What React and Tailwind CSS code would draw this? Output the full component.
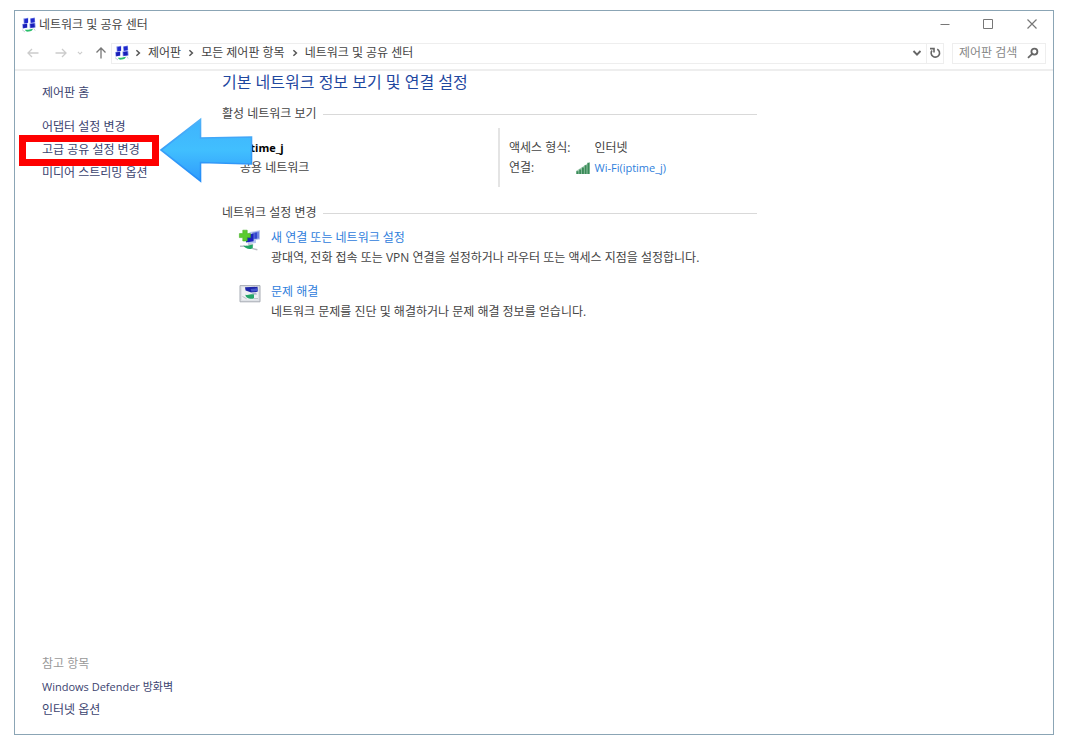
import React from 'react';

const NetworkIcon = ({ className }) => (
  <svg viewBox="0 0 16 16" className={className} aria-hidden="true">
    <path d="m2.4 1.6 4.8-.8v5l-4.4.8zM9 1.4l4.8-.8.4 4.6-4.8.8z" fill="#7d8ce8" />
    <path d="m3.4 2.2 3.6-.6v4.2l-3.6.6zM9.8 1.8l3.6-.6.2 4-3.6.6z" fill="#2029cc" />
    <path d="m1.2 7 5.2-.8v4.6l-4.8.6zM8.4 6.6l5.8-.8.4 4.6-5.8.8z" fill="#7d8ce8" />
    <path d="M2 7.4 6 6.8v3.8l-3.8.6zM9.2 7l4.2-.6.4 3.8-4.2.6z" fill="#1a1fb8" />
    <path d="M1 12.6 4 15M12.8 11.6l1.4 2" stroke="#c9d2dc" />
    <path d="M4 12.8c2 0 2.8.2 4.4-.4l3.4-.6c.2 1.4-1.8 2.8-4.2 2.8-1.6.2-3.4-.4-3.6-1.8z" fill="#2bbf6c" />
  </svg>
);

const NewConnectionIcon = () => (
  <svg viewBox="0 0 24 24" className="w-6 h-6" aria-hidden="true">
    <path d="m12 4 10-1.8v9L18 12v3l-8 1V6z" fill="#b9c6ee" />
    <path d="m14.4 4.6 6.6-1.2v7l-6.6 1.2z" fill="#6f83de" />
    <path d="m8 7 7.6-1.4v7.6L8 14.6z" fill="#1b22bd" />
    <path d="m16.4 5 2.6-.4v5.8l-2.6.4z" fill="#3446cf" />
    <path d="M9.4 15.4h5l1.4 1.8-5 .6z" fill="#c3c8d2" />
    <path d="M2 18.2h7M14 20.4l5.4 1.4" stroke="#b8bcc2" strokeWidth="1.4" />
    <path d="M5.4 17.6c2.8 1 5-.6 9.4-1.2v3.4c-1 2-7.6 1.8-9.4-2.2z" fill="#21a565" />
    <path d="M4.8 2.2h4.4v3.4h3.2v4H9.2V13H4.8V9.6H1.4v-4h3.4z" fill="#5bcb2f" stroke="#45b025" strokeWidth=".6" />
  </svg>
);

const TroubleshootIcon = () => (
  <svg viewBox="0 0 24 24" className="w-6 h-6" aria-hidden="true">
    <path d="M2 3.6h20v16.2H2z" fill="#dfe2e7" stroke="#a7acb4" />
    <path d="M4 5.4h16v12.4H4z" fill="#eef0f3" />
    <path d="m7 5.2 12.6-.4v5l-6.4.6-5.6-2z" fill="#1d25a8" />
    <path d="m12.6 7 7-.8v2.8l-6.2.6z" fill="#4657cb" />
    <path d="m13 10.8 5-.4 1 2-3 .4z" fill="#adb7cd" />
    <path d="M7.4 12.8c3.2.8 5-.8 8.6-.4v3.8c-2.4 1.2-8.4.6-8.6-3.4z" fill="#25a56a" />
    <path d="m4.4 14.4 4.2 2.4M16 16.6h4" stroke="#bcc1c8" />
  </svg>
);

const SignalIcon = () => (
  <svg viewBox="0 0 14 12" className="w-3.5 h-3" aria-hidden="true">
    <path d="M0 12V9l14-9v12z" fill="#a3cdb3" />
    <path d="M.5 12V9.2h2V12zM3.2 12V7.4h2V12zM5.9 12V5.4h2V12zM8.6 12V3.2h2V12zM11.4 12V.8h2V12z" fill="#3a8b58" />
  </svg>
);

const Chevron = ({ className }) => (
  <svg viewBox="0 0 8 8" className={className} fill="none" stroke="currentColor" strokeWidth="1.5" aria-hidden="true">
    <path d="m2.4 1.2 3 2.8-3 2.8" />
  </svg>
);

const sidebarLinks = ['어댑터 설정 변경', '고급 공유 설정 변경', '미디어 스트리밍 옵션'];
const relatedLinks = ['Windows Defender 방화벽', '인터넷 옵션'];
const breadcrumbs = ['제어판', '모든 제어판 항목', '네트워크 및 공유 센터'];

const tasks = [
  {
    icon: <NewConnectionIcon />,
    title: '새 연결 또는 네트워크 설정',
    description: '광대역, 전화 접속 또는 VPN 연결을 설정하거나 라우터 또는 액세스 지점을 설정합니다.'
  },
  {
    icon: <TroubleshootIcon />,
    title: '문제 해결',
    description: '네트워크 문제를 진단 및 해결하거나 문제 해결 정보를 얻습니다.'
  }
];

const TitleBar = () => (
  <header className="flex items-center h-[26px] pt-0.5 pl-1.5 pr-[15px]">
    <NetworkIcon className="w-4 h-4 mr-0.5" />
    <h1 className="text-[#444]">네트워크 및 공유 센터</h1>
    <div className="flex gap-8 ml-auto text-[#777]">
      <button type="button" aria-label="최소화">
        <svg viewBox="0 0 12 12" className="w-3 h-3" fill="none" stroke="currentColor">
          <path d="M2.5 5.5h9" />
        </svg>
      </button>
      <button type="button" aria-label="최대화">
        <svg viewBox="0 0 12 12" className="w-3 h-3" fill="none" stroke="currentColor">
          <path d="M1.5 .5h9v9h-9z" />
        </svg>
      </button>
      <button type="button" aria-label="닫기">
        <svg viewBox="0 0 12 12" className="w-3 h-3" fill="none" stroke="currentColor" strokeWidth="1.2">
          <path d="m1.5 .5 9 9m0-9-9 9" />
        </svg>
      </button>
    </div>
  </header>
);

const AddressBar = () => (
  <div className="flex items-center h-[34px] pl-3 pr-[7px] border-b-2 border-[#eee]">
    <button type="button" aria-label="뒤로" className="text-[#ccc]">
      <svg viewBox="0 0 12 12" className="w-3 h-3" fill="none" stroke="currentColor" strokeWidth="1.3">
        <path d="M11.5 6H1m4-4L1 6l4 4" />
      </svg>
    </button>
    <button type="button" aria-label="앞으로" className="ml-4 text-[#ccc]">
      <svg viewBox="0 0 12 12" className="w-3 h-3" fill="none" stroke="currentColor" strokeWidth="1.3">
        <path d="M.5 6H11M7 2l4 4-4 4" />
      </svg>
    </button>
    <button type="button" aria-label="최근 위치" className="ml-2.5 text-[#ccc]">
      <Chevron className="w-1.5 h-1.5 rotate-90" />
    </button>
    <button type="button" aria-label="위로" className="ml-3 text-[#777]">
      <svg viewBox="0 0 12 12" className="w-3 h-3" fill="none" stroke="currentColor" strokeWidth="1.3">
        <path d="M6 11.5V1M1.5 5.5 6 1l4.5 4.5" />
      </svg>
    </button>

    <div className="flex flex-1 h-[21px] ml-1 border border-[#eee]">
      <nav className="flex flex-1 items-center pl-0.5" aria-label="경로">
        <NetworkIcon className="w-4 h-4 -mr-0.5" />
        {breadcrumbs.map(crumb => (
          <React.Fragment key={crumb}>
            <Chevron className="w-2 h-2 mx-1.5 text-[#555]" />
            <a href="#" className="text-[#444]">{crumb}</a>
          </React.Fragment>
        ))}
      </nav>
      <button type="button" aria-label="이전 위치" className="px-1 text-[#666]">
        <Chevron className="w-2.5 h-2.5 rotate-90" />
      </button>
      <button type="button" aria-label="새로 고침" className="px-0.5 border-l border-[#eee] text-[#666]">
        <svg viewBox="0 0 12 12" className="w-3 h-3" fill="none" stroke="currentColor" strokeWidth="1.6">
          <path d="M8.2 2.2A4.2 4.2 0 1 1 3 3.4" />
          <path d="M1 1.6h4v4" />
        </svg>
      </button>
    </div>

    <div className="flex items-center w-[94px] h-[21px] ml-2 px-1.5 border border-[#eee]">
      <input
        type="text"
        aria-label="제어판 검색"
        placeholder="제어판 검색"
        className="flex-1 min-w-0 leading-4 outline-none placeholder:text-[#888]"
      />
      <svg viewBox="0 0 12 12" className="w-3 h-3 text-[#666]" fill="none" stroke="currentColor" strokeWidth="1.8" aria-hidden="true">
        <circle cx="7.4" cy="4.6" r="3" />
        <path d="M5.2 6.8 1 10.8" />
      </svg>
    </div>
  </div>
);

// 강조 표시용 빨간 상자와 화살표
const Highlight = () => (
  <>
    <span className="absolute -left-[23px] -top-[3px] w-[140px] h-[31px] border-7 border-[#fe0000] pointer-events-none" />
    <svg viewBox="0 0 94 66" className="absolute left-[117px] -top-[21px] w-[94px] h-[66px] max-w-none pointer-events-none" aria-hidden="true">
      <defs>
        <linearGradient id="arrowFill" x1="0" y1="0" x2="0" y2="1">
          <stop offset="0" stopColor="#3fb3fd" />
          <stop offset=".5" stopColor="#41bffe" />
          <stop offset="1" stopColor="#2f9bfc" />
        </linearGradient>
        <linearGradient id="arrowEdge" x1="0" y1="0" x2="0" y2="1">
          <stop offset="0" stopColor="#4fb2f8" />
          <stop offset="1" stopColor="#238df8" />
        </linearGradient>
      </defs>
      <path
        d="M2 33 41.5 2.5V21l51-1v27l-51-1.5V64z"
        fill="url(#arrowFill)"
        stroke="url(#arrowEdge)"
        strokeWidth="1.6"
      />
    </svg>
  </>
);

const Sidebar = () => (
  <aside className="relative z-10 flex flex-col shrink-0 w-[207px] pl-[27px] pt-2.5 pb-[13px] leading-[23px] text-[#3c4470]">
    <a href="#" className="self-start">제어판 홈</a>
    <ul className="mt-[11px]">
      {sidebarLinks.map((label, index) => (
        <li key={label} className="relative">
          <a href="#">{label}</a>
          {index === 1 && <Highlight />}
        </li>
      ))}
    </ul>
    <div className="mt-auto">
      <h2 className="text-[#999]">참고 항목</h2>
      <ul>
        {relatedLinks.map((label, index) => (
          <li key={label} className={index === 0 ? 'text-[11px]' : ''}>
            <a href="#">{label}</a>
          </li>
        ))}
      </ul>
    </div>
  </aside>
);

const SectionTitle = ({ children }) => (
  <h3 className="flex items-center gap-1.5 leading-5">
    {children}
    <span className="flex-1 h-px bg-[#d9d9d9]" />
  </h3>
);

const App = () => (
  <div
    className="flex flex-col min-h-screen pt-2.5 pb-[19px] pl-3.5 pr-[18px] bg-white text-xs text-[#444]"
    style={{ fontFamily: '"Open Sans", "Noto Sans CJK KR", sans-serif' }}
  >
    <div className="flex flex-col flex-1 border border-[#8ba5b5]">
      <TitleBar />
      <AddressBar />
      <div className="flex flex-1">
        <Sidebar />
        <main className="flex-1 max-w-[535px]">
          <h2 className="text-base leading-[22px] text-[#1f489f]">기본 네트워크 정보 보기 및 연결 설정</h2>

          <section className="mt-[11px]">
            <SectionTitle>활성 네트워크 보기</SectionTitle>
            <div className="flex mt-1">
              <div className="w-[276px] pt-2.5 pl-[18px] leading-5">
                <p className="text-[11px] leading-5 font-bold text-black">iptime_j</p>
                <p>공용 네트워크</p>
              </div>
              <dl className="grid flex-1 grid-cols-[auto_1fr] content-start gap-x-6 h-[59px] pt-2.5 pl-[9px] border-l-2 border-[#e4e4e4] leading-5">
                <dt>액세스 형식:</dt>
                <dd>인터넷</dd>
                <dt>연결:</dt>
                <dd className="flex items-center gap-1 -ml-[18px]">
                  <SignalIcon />
                  <a href="#" className="text-[11px] text-[#2f80dc]">Wi-Fi(iptime_j)</a>
                </dd>
              </dl>
            </div>
          </section>

          <section className="mt-4">
            <SectionTitle>네트워크 설정 변경</SectionTitle>
            <ul className="flex flex-col gap-3.5 mt-[5px]">
              {tasks.map(task => (
                <li key={task.title} className="flex gap-2 pl-4 leading-5">
                  {task.icon}
                  <div className="pl-px">
                    <a href="#" className="text-[#2f80dc]">{task.title}</a>
                    <p>{task.description}</p>
                  </div>
                </li>
              ))}
            </ul>
          </section>
        </main>
      </div>
    </div>
  </div>
);

export default App;
